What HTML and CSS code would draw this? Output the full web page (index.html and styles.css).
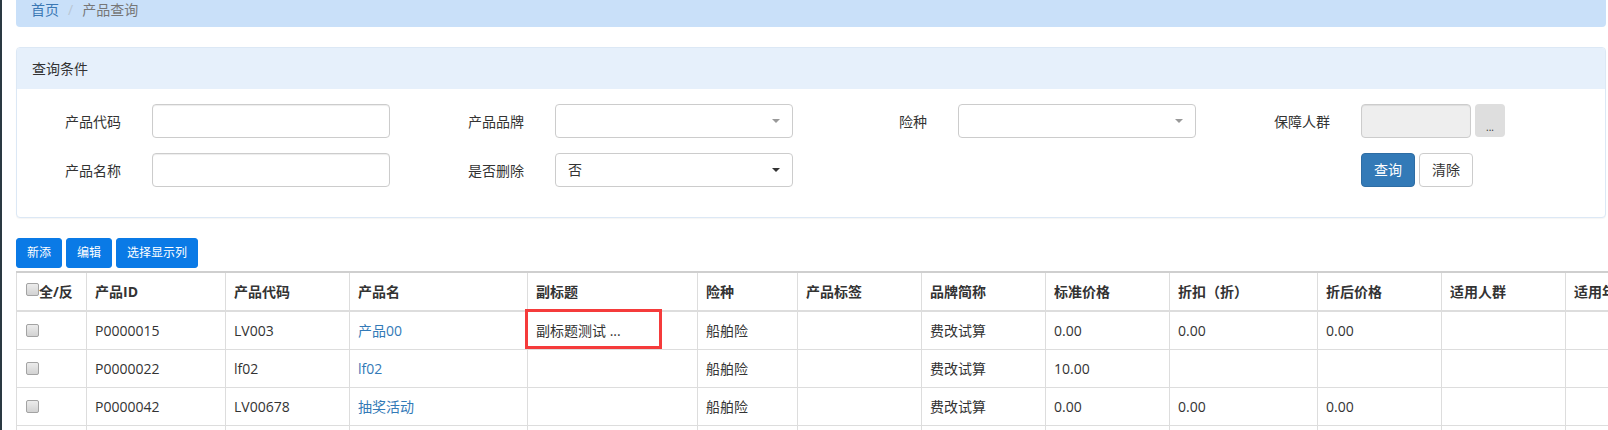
FILE: index.html
```html
<!DOCTYPE html>
<html lang="zh-CN">
<head>
<meta charset="utf-8">
<title>产品查询</title>
<link rel="stylesheet" href="styles.css">
</head>
<body>
<div class="page">
  <div class="breadcrumb">
    <a href="#">首页</a><span class="sep">/</span><span class="crumb-active">产品查询</span>
  </div>

  <div class="panel">
    <div class="panel-heading">查询条件</div>
    <div class="panel-body">
      <div class="form">
        <div class="fg">
          <label class="lbl">产品代码</label>
          <div class="input"></div>
        </div>
        <div class="fg">
          <label class="lbl">产品品牌</label>
          <div class="input select"><span></span><span class="caret caret-light"></span></div>
        </div>
        <div class="fg">
          <label class="lbl">险种</label>
          <div class="input select"><span></span><span class="caret caret-light"></span></div>
        </div>
        <div class="fg">
          <label class="lbl">保障人群</label>
          <div class="input-group">
            <div class="input input-disabled"></div>
            <span class="btn-dots">...</span>
          </div>
        </div>

        <div class="fg">
          <label class="lbl">产品名称</label>
          <div class="input"></div>
        </div>
        <div class="fg">
          <label class="lbl">是否删除</label>
          <div class="input select"><span>否</span><span class="caret"></span></div>
        </div>
        <div class="fg"></div>
        <div class="fg">
          <span class="lbl"></span>
          <div class="btns">
            <button class="btn btn-primary">查询</button>
            <button class="btn btn-default">清除</button>
          </div>
        </div>
      </div>
    </div>
  </div>

  <div class="toolbar">
    <button class="tbtn">新添</button>
    <button class="tbtn">编辑</button>
    <button class="tbtn">选择显示列</button>
  </div>

  <table class="grid">
    <colgroup>
      <col style="width:70px"><col style="width:139px"><col style="width:124px"><col style="width:178px">
      <col style="width:170px"><col style="width:100px"><col style="width:124px"><col style="width:124px">
      <col style="width:124px"><col style="width:148px"><col style="width:124px"><col style="width:124px">
      <col style="width:124px">
    </colgroup>
    <thead>
      <tr>
        <th><span class="cb"></span>全/反</th>
        <th>产品ID</th>
        <th>产品代码</th>
        <th>产品名</th>
        <th>副标题</th>
        <th>险种</th>
        <th>产品标签</th>
        <th>品牌简称</th>
        <th>标准价格</th>
        <th>折扣（折）</th>
        <th>折后价格</th>
        <th>适用人群</th>
        <th>适用年龄</th>
      </tr>
    </thead>
    <tbody>
      <tr>
        <td><span class="cb"></span></td>
        <td>P0000015</td>
        <td>LV003</td>
        <td><a href="#">产品00</a></td>
        <td class="selected-cell">副标题测试 ...<span class="sel-box"></span></td>
        <td>船舶险</td>
        <td></td>
        <td>费改试算</td>
        <td>0.00</td>
        <td>0.00</td>
        <td>0.00</td>
        <td></td>
        <td></td>
      </tr>
      <tr>
        <td><span class="cb"></span></td>
        <td>P0000022</td>
        <td>lf02</td>
        <td><a href="#">lf02</a></td>
        <td></td>
        <td>船舶险</td>
        <td></td>
        <td>费改试算</td>
        <td>10.00</td>
        <td></td>
        <td></td>
        <td></td>
        <td></td>
      </tr>
      <tr>
        <td><span class="cb"></span></td>
        <td>P0000042</td>
        <td>LV00678</td>
        <td><a href="#">抽奖活动</a></td>
        <td></td>
        <td>船舶险</td>
        <td></td>
        <td>费改试算</td>
        <td>0.00</td>
        <td>0.00</td>
        <td>0.00</td>
        <td></td>
        <td></td>
      </tr>
      <tr class="row-empty">
        <td></td><td></td><td></td><td></td><td></td><td></td><td></td>
        <td></td><td></td><td></td><td></td><td></td><td></td>
      </tr>
    </tbody>
  </table>
</div>
</body>
</html>
```

FILE: styles.css
```css
html, body {
  margin: 0;
  padding: 0;
  overflow: hidden;
  background: #fff;
}

body {
  font-family: "Open Sans", "Noto Sans CJK SC", sans-serif;
  font-size: 14px;
  line-height: 20px;
  color: #333;
}

.page {
  border-left: 2px solid #2a3942;
  padding: 0 2px 0 14px;
  height: 430px;
  box-sizing: border-box;
}

/* breadcrumb */
.breadcrumb {
  display: flex;
  align-items: center;
  background: #c9e0f9;
  border-radius: 0 0 4px 4px;
  padding: 0 15px 7px;
  line-height: 20px;
}
.breadcrumb a {
  color: #3b78b4;
  text-decoration: none;
}
.sep {
  color: #b9c6d3;
  margin: 0 9px;
}
.crumb-active {
  color: #777;
}

/* panel */
.panel {
  margin-top: 20px;
  border: 1px solid #dce8f5;
  border-radius: 4px;
  box-shadow: 0 1px 1px rgba(0, 0, 0, 0.04);
  background: #fff;
}
.panel-heading {
  background: #e6f0fb;
  padding: 10px 15px;
  line-height: 21px;
  border-radius: 3px 3px 0 0;
}
.panel-body {
  padding: 15px 0 30px;
}

.form {
  display: grid;
  grid-template-columns: 403px 403px 403px 1fr;
  row-gap: 15px;
}
.fg {
  display: grid;
  grid-template-columns: 104px auto;
  column-gap: 31px;
  align-items: center;
  justify-content: start;
}
.lbl {
  text-align: right;
  line-height: 20px;
  padding-top: 1px;
}

.input {
  width: 238px;
  height: 34px;
  box-sizing: border-box;
  border: 1px solid #ccc;
  border-radius: 4px;
  background: #fff;
  box-shadow: inset 0 1px 1px rgba(0, 0, 0, 0.075);
}
.select {
  display: flex;
  align-items: center;
  justify-content: space-between;
  padding: 0 12px 0 12px;
  box-shadow: none;
  line-height: 20px;
}
.caret {
  width: 0;
  height: 0;
  border-left: 4px solid transparent;
  border-right: 4px solid transparent;
  border-top: 4px solid #333;
}
.caret-light {
  border-top-color: #999;
}

.input-group {
  display: flex;
  align-items: flex-start;
  gap: 4px;
}
.input-disabled {
  width: 110px;
  background: #eee;
}
.btn-dots {
  width: 30px;
  height: 33px;
  box-sizing: border-box;
  background: #dedede;
  border-radius: 4px;
  font-size: 10px;
  line-height: 10px;
  text-align: center;
  padding-top: 18px;
  color: #333;
}

.btns {
  display: flex;
  gap: 4px;
}
.btn {
  font-family: inherit;
  font-size: 14px;
  line-height: 20px;
  padding: 6px 12px;
  border-radius: 4px;
  border: 1px solid #ccc;
  background: #fff;
  color: #333;
  margin: 0;
}
.btn-primary {
  background: #337ab7;
  border-color: #2e6da4;
  color: #fff;
}

/* toolbar */
.toolbar {
  display: flex;
  gap: 4px;
  margin-top: 20px;
}
.tbtn {
  font-family: inherit;
  font-size: 12px;
  line-height: 18px;
  padding: 5px 10px;
  border: 1px solid #0a7ae6;
  background: #0a7ae6;
  color: #fff;
  border-radius: 3px;
  margin: 0;
}

/* table */
.grid {
  margin-top: 3px;
  border-collapse: collapse;
  table-layout: fixed;
  width: 1673px;
  border-top: 2px solid #cfcfcf;
  border-left: 1px solid #ddd;
}
.grid th,
.grid td {
  border: 1px solid #ddd;
  padding: 8px 8px;
  line-height: 21px;
  height: 21px;
  text-align: left;
  vertical-align: middle;
  white-space: nowrap;
  overflow: hidden;
}
.grid thead th {
  font-weight: bold;
  border-bottom: 2px solid #ddd;
  border-top: 2px solid #cfcfcf;
}
.grid a {
  color: #337ab7;
  text-decoration: none;
}

.cb {
  display: inline-block;
  width: 13px;
  height: 13px;
  box-sizing: border-box;
  border: 1px solid #a3a3a3;
  border-radius: 2px;
  background: linear-gradient(#ececec, #d2d2d2);
  vertical-align: -1px;
  margin-left: 1px;
}
.grid th .cb {
  vertical-align: 1px;
}

.selected-cell {
  position: relative;
  overflow: visible !important;
}
.sel-box {
  position: absolute;
  left: -3px;
  top: -3px;
  width: 137px;
  height: 40px;
  box-sizing: border-box;
  border: 3px solid #f53b3b;
  pointer-events: none;
}
```
